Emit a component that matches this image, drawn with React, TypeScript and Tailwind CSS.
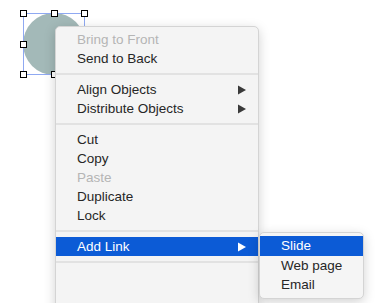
import React from "react";

type Item = { label: string; disabled?: boolean; arrow?: boolean; active?: boolean } | "sep";

const items: Item[] = [
  { label: "Bring to Front", disabled: true },
  { label: "Send to Back" },
  "sep",
  { label: "Align Objects", arrow: true },
  { label: "Distribute Objects", arrow: true },
  "sep",
  { label: "Cut" },
  { label: "Copy" },
  { label: "Paste", disabled: true },
  { label: "Duplicate" },
  { label: "Lock" },
  "sep",
  { label: "Add Link", arrow: true, active: true },
  "sep",
];

function Arrow({ white }: { white?: boolean }) {
  return (
    <svg width="8" height="10" viewBox="0 0 8 10" className="shrink-0">
      <path d="M0 0.5 L8 5 L0 9.5 Z" fill={white ? "#ffffff" : "#3a3a3a"} />
    </svg>
  );
}

function Handle({ className }: { className: string }) {
  return <div className={`absolute h-[7px] w-[7px] border border-black bg-white ${className}`} />;
}

export default function App() {
  return (
    <div
      className="relative h-[303px] w-[380px] overflow-hidden bg-white"
      style={{ fontFamily: '"Liberation Sans", Arial, sans-serif' }}
    >
      {/* selected shape on the canvas */}
      <div className="absolute left-[23px] top-[13px] h-[62px] w-[62px]">
        <div className="h-full w-full rounded-full bg-[#a3b9b8]" />
        <div className="absolute inset-0 border border-[#8fa9f2]" />
        <Handle className="-left-[3px] -top-[3px]" />
        <Handle className="left-[28px] -top-[3px]" />
        <Handle className="-right-[3px] -top-[3px]" />
        <Handle className="-left-[3px] top-[28px]" />
        <Handle className="-right-[3px] top-[28px]" />
        <Handle className="-left-[3px] -bottom-[3px]" />
        <Handle className="left-[28px] -bottom-[3px]" />
        <Handle className="-right-[3px] -bottom-[3px]" />
      </div>

      {/* context menu */}
      <div className="absolute left-[55px] top-[26px] h-[300px] w-[204px] rounded-[5px] border border-[#d4d4d4] bg-[#f4f4f4] pt-[3px] shadow-[0_3px_12px_rgba(0,0,0,0.18)]">
        {items.map((it, i) =>
          it === "sep" ? (
            <div key={i} className="flex h-[12px] items-center">
              <div className="h-[2px] w-full bg-[#e2e2e2]" />
            </div>
          ) : (
            <div
              key={i}
              className={`flex h-[19px] items-center justify-between pl-[21px] pr-[12px] text-[13.5px] leading-none ${
                it.active ? "bg-[#0c5bd6] text-white" : it.disabled ? "text-[#b5b5b5]" : "text-[#262626]"
              }`}
            >
              <span>{it.label}</span>
              {it.arrow && <Arrow white={it.active} />}
            </div>
          )
        )}
      </div>

      {/* submenu */}
      <div className="absolute left-[259px] top-[232px] w-[105px] rounded-[5px] border border-[#d4d4d4] bg-[#f5f5f5] py-[3px] shadow-[0_3px_12px_rgba(0,0,0,0.18)]">
        {["Slide", "Web page", "Email"].map((s, i) => (
          <div
            key={s}
            className={`flex h-[19.5px] items-center pl-[21px] text-[13.5px] leading-none ${
              i === 0 ? "bg-[#0c5bd6] text-white" : "text-[#262626]"
            }`}
          >
            {s}
          </div>
        ))}
      </div>
    </div>
  );
}
